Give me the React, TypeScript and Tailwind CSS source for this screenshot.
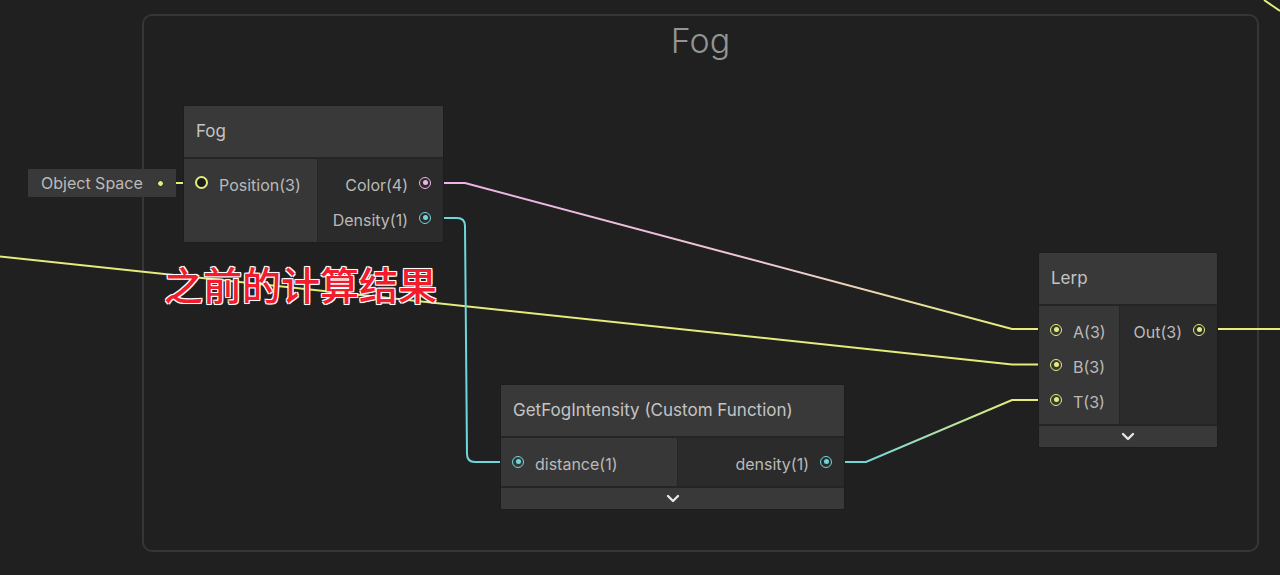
import React from 'react';

type PortColor = 'yellow' | 'pink' | 'cyan';

const ring: Record<PortColor, string> = {
    yellow: 'border-[#e4ec7c]',
    pink: 'border-[#eeb3e8]',
    cyan: 'border-[#6fd6dc]',
};
const dot: Record<PortColor, string> = {
    yellow: 'bg-[#e4ec7c]',
    pink: 'bg-[#eeb3e8]',
    cyan: 'bg-[#6fd6dc]',
};

function Port({ color, hollow = false }: { color: PortColor; hollow?: boolean }) {
    if (hollow) {
        return <div className={`w-[13px] h-[13px] rounded-full border-2 ${ring[color]} bg-[#1c1c1c] shrink-0`} />;
    }
    return (
        <div className={`w-[12px] h-[12px] rounded-full border-[1.5px] ${ring[color]} flex items-center justify-center shrink-0`}>
            <div className={`w-[5px] h-[5px] rounded-full ${dot[color]}`} />
        </div>
    );
}

function Chevron() {
    return (
        <svg width="14" height="9" viewBox="0 0 14 9" fill="none">
            <path d="M2 2l5 5 5-5" stroke="#e6e6e6" strokeWidth="2.4" strokeLinecap="round" strokeLinejoin="round" />
        </svg>
    );
}

interface Slot {
    label: string;
    color: PortColor;
    hollow?: boolean;
}

interface NodeProps {
    title: string;
    className: string;
    inputWidth: string;
    inputs: Slot[];
    outputs: Slot[];
    collapsible?: boolean;
}

function GraphNode({ title, className, inputWidth, inputs, outputs, collapsible }: NodeProps) {
    return (
        <div className={`absolute flex flex-col bg-[#2b2b2b] border border-[#1d1d1d] rounded-[2px] overflow-hidden ${className}`}>
            <div className="h-[53px] bg-[#393939] flex items-center px-3 text-[17px] text-[#c4c4c4] border-b-2 border-[#252525]">
                {title}
            </div>
            <div className="flex">
                <div className={`${inputWidth} bg-[#373737] border-r border-[#252525] pt-[6px] pb-[7px]`}>
                    {inputs.map((s) => (
                        <div key={s.label} className="h-[35px] flex items-center pl-[11px] gap-[11px] text-[16px] text-[#bababa]">
                            <Port color={s.color} hollow={s.hollow} />
                            <span className="pt-[4px]">{s.label}</span>
                        </div>
                    ))}
                </div>
                <div className="flex-1 bg-[#2b2b2b] pt-[6px] pb-[7px]">
                    {outputs.map((s) => (
                        <div key={s.label} className="h-[35px] flex items-center justify-end pr-[12px] gap-[11px] text-[16px] text-[#bababa]">
                            <span className="pt-[4px]">{s.label}</span>
                            <Port color={s.color} />
                        </div>
                    ))}
                </div>
            </div>
            {collapsible && (
                <div className="h-[23px] bg-[#393939] border-t-2 border-[#252525] flex items-center justify-center">
                    <Chevron />
                </div>
            )}
        </div>
    );
}

export default function App() {
    return (
        <div className="relative w-[1280px] h-[575px] bg-[#202020] overflow-hidden font-['Inter','Liberation_Sans',sans-serif]">
            {/* Group frame */}
            <div className="absolute left-[142px] top-[14px] w-[1117px] h-[538px] rounded-[10px] border-2 border-[#363636] flex justify-center">
                <div className="mt-[6px] text-[34px] font-light text-[#949494] leading-none pt-[2px]">Fog</div>
            </div>

            {/* Wires */}
            <svg className="absolute inset-0" width="1280" height="575" fill="none">
                <defs>
                    <linearGradient id="pinkToYellow" gradientUnits="userSpaceOnUse" x1="470" y1="0" x2="1012" y2="0">
                        <stop offset="0" stopColor="#eeb3e8" />
                        <stop offset="0.55" stopColor="#f0c8d4" />
                        <stop offset="1" stopColor="#e4ec7c" />
                    </linearGradient>
                    <linearGradient id="cyanToYellow" gradientUnits="userSpaceOnUse" x1="860" y1="0" x2="1012" y2="0">
                        <stop offset="0" stopColor="#6fd6dc" />
                        <stop offset="1" stopColor="#e4ec7c" />
                    </linearGradient>
                </defs>
                <path d="M444 183 H465 L1012 329 H1040" stroke="url(#pinkToYellow)" strokeWidth="2" />
                <path d="M0 256.5 L1012 364.5 H1040" stroke="#e4ec7c" strokeWidth="2" />
                <path d="M444 218 H457 Q465 218 465 226 L467 454 Q467 462 475 462 H502" stroke="#6fd6dc" strokeWidth="2" />
                <path d="M844 462 H866 L1012 400 H1040" stroke="url(#cyanToYellow)" strokeWidth="2" />
                <path d="M1217 329 H1280" stroke="#e4ec7c" strokeWidth="2" />
                <path d="M176 183 H196" stroke="#e4ec7c" strokeWidth="2" />
                <path d="M1264 0 L1280 11" stroke="#e4ec7c" strokeWidth="2" />
            </svg>

            {/* Object Space property */}
            <div className="absolute left-[28px] top-[169px] w-[148px] h-[28px] bg-[#393939] flex items-center pl-[13px] pr-[12px] text-[16px] text-[#bababa] rounded-[1px]">
                <span className="flex-1">Object Space</span>
                <div className="w-[7px] h-[7px] rounded-full bg-[#e4ec7c] border border-[#1c1c1c]" />
            </div>

            <GraphNode
                title="Fog"
                className="left-[183px] top-[105px] w-[261px]"
                inputWidth="w-[134px]"
                inputs={[{ label: 'Position(3)', color: 'yellow', hollow: true }]}
                outputs={[
                    { label: 'Color(4)', color: 'pink' },
                    { label: 'Density(1)', color: 'cyan' },
                ]}
            />

            <GraphNode
                title="Lerp"
                className="left-[1038px] top-[252px] w-[180px]"
                inputWidth="w-[81px]"
                inputs={[
                    { label: 'A(3)', color: 'yellow' },
                    { label: 'B(3)', color: 'yellow' },
                    { label: 'T(3)', color: 'yellow' },
                ]}
                outputs={[{ label: 'Out(3)', color: 'yellow' }]}
                collapsible
            />

            <GraphNode
                title="GetFogIntensity (Custom Function)"
                className="left-[500px] top-[384px] w-[345px]"
                inputWidth="w-[177px]"
                inputs={[{ label: 'distance(1)', color: 'cyan' }]}
                outputs={[{ label: 'density(1)', color: 'cyan' }]}
                collapsible
            />

            {/* Annotation */}
            <div className="absolute left-[164px] top-[264px] text-[39px] leading-none font-medium text-[#f21c2c] font-['Noto_Sans_CJK_SC',sans-serif] [text-shadow:0_0_2px_#fff,1px_1px_0_#fff,-1px_-1px_0_#fff,1px_-1px_0_#fff,-1px_1px_0_#fff]">
                之前的计算结果
            </div>
        </div>
    );
}
